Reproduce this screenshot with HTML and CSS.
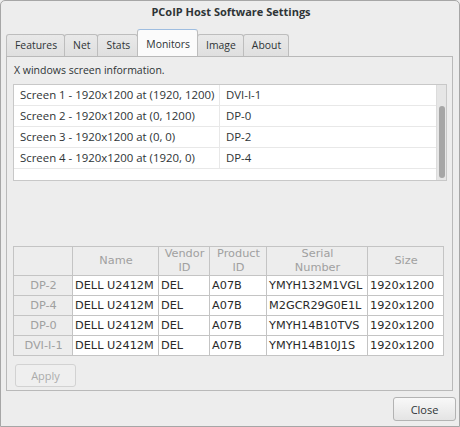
FILE: index.html
```html
<!DOCTYPE html>
<html>
<head>
<meta charset="utf-8">
<title>PCoIP Host Software Settings</title>
<link rel="stylesheet" href="styles.css">
</head>
<body>
<div class="window">
  <div class="titlebar">PCoIP Host Software Settings</div>
  <div class="notebook">
    <div class="tabs">
      <div class="tab">Features</div>
      <div class="tab">Net</div>
      <div class="tab">Stats</div>
      <div class="tab active">Monitors</div>
      <div class="tab">Image</div>
      <div class="tab">About</div>
    </div>
    <div class="panel">
      <div class="label">X windows screen information.</div>
      <div class="listbox">
        <div class="rows">
          <div class="row"><span class="c1">Screen 1 - 1920x1200 at (1920, 1200)</span><span class="c2">DVI-I-1</span></div>
          <div class="row"><span class="c1">Screen 2 - 1920x1200 at (0, 1200)</span><span class="c2">DP-0</span></div>
          <div class="row"><span class="c1">Screen 3 - 1920x1200 at (0, 0)</span><span class="c2">DP-2</span></div>
          <div class="row"><span class="c1">Screen 4 - 1920x1200 at (1920, 0)</span><span class="c2">DP-4</span></div>
        </div>
        <div class="scrollbar"><div class="thumb"></div></div>
      </div>
      <table class="grid">
        <colgroup>
          <col class="w-rh"><col class="w-name"><col class="w-vid"><col class="w-pid"><col class="w-sn"><col class="w-size">
        </colgroup>
        <tr class="head">
          <th></th><th>Name</th><th>Vendor<br>ID</th><th>Product<br>ID</th><th>Serial<br>Number</th><th>Size</th>
        </tr>
        <tr><td class="rh">DP-2</td><td>DELL U2412M</td><td>DEL</td><td>A07B</td><td>YMYH132M1VGL</td><td>1920x1200</td></tr>
        <tr><td class="rh">DP-4</td><td>DELL U2412M</td><td>DEL</td><td>A07B</td><td>M2GCR29G0E1L</td><td>1920x1200</td></tr>
        <tr><td class="rh">DP-0</td><td>DELL U2412M</td><td>DEL</td><td>A07B</td><td>YMYH14B10TVS</td><td>1920x1200</td></tr>
        <tr><td class="rh">DVI-I-1</td><td>DELL U2412M</td><td>DEL</td><td>A07B</td><td>YMYH14B10J1S</td><td>1920x1200</td></tr>
      </table>
      <div class="apply-row"><button class="btn apply" disabled>Apply</button></div>
    </div>
  </div>
  <div class="footer"><button class="btn close">Close</button></div>
</div>
</body>
</html>
```
FILE: styles.css
```css
* { box-sizing: border-box; }
html, body { margin: 0; padding: 0; }
body {
  width: 460px;
  height: 427px;
  overflow: hidden;
  background: #ededed;
  font-family: "Open Sans", "DejaVu Sans", sans-serif;
  font-size: 11px;
  color: #2e3436;
}
.window {
  width: 460px;
  height: 427px;
  border: 1px solid #a6a6a6;
  border-radius: 5px 5px 0 0;
  background: #ededed;
  padding: 0 3px 0 5px;
  display: flex;
  flex-direction: column;
}
.titlebar {
  height: 28px;
  line-height: 22px;
  text-align: center;
  font-weight: bold;
  font-size: 11px;
  color: #2e3436;
}
.notebook { width: 447px; }
.tabs {
  height: 27px;
  display: flex;
  align-items: flex-end;
  padding-left: 1px;
}
.tab {
  height: 22px;
  line-height: 21px;
  padding: 0 7px 0 8px;
  margin-left: -1px;
  border: 1px solid #bdbdbd;
  border-bottom: none;
  border-radius: 3px 3px 0 0;
  background: linear-gradient(#e9e9e9, #dfdfdf);
  color: #2e3436;
  font-size: 10.4px;
}
.tab.active {
  height: 27px;
  padding-top: 4px;
  background: #fbfbfb;
  border-top-color: #9ebde0;
  position: relative;
  z-index: 1;
}
.panel {
  height: 335px;
  border: 1px solid #b9b9b9;
  background: #ededed;
  padding: 0 6px;
}
.label {
  height: 27px;
  line-height: 27px;
  font-size: 10.5px;
  padding-left: 1px;
}
.listbox {
  width: 434px;
  height: 97px;
  border: 1px solid #c8c8c8;
  background: #fff;
  display: flex;
}
.rows { flex: 1; }
.row {
  height: 21px;
  display: flex;
  border-bottom: 1px solid #e8e8e8;
  line-height: 20px;
  font-size: 11.4px;
}
.c1 {
  width: 206px;
  padding-left: 6px;
  border-right: 1px solid #e8e8e8;
  white-space: nowrap;
}
.c2 { padding-left: 6px; }
.scrollbar {
  width: 10px;
  background: #e6e6e6;
  border-left: 1px solid #dcdcdc;
  padding: 21px 0 0 2px;
}
.thumb {
  width: 6px;
  height: 72px;
  border-radius: 3px;
  background: #a6a6a6;
}
.grid {
  margin-top: 65px;
  width: 430px;
  table-layout: fixed;
  border-collapse: collapse;
  font-family: "DejaVu Sans", sans-serif;
  font-size: 11.3px;
}
.w-rh { width: 59px; }
.w-name { width: 86px; }
.w-vid { width: 51px; }
.w-pid { width: 57px; }
.w-sn { width: 101px; }
.w-size { width: 76px; }
.grid th, .grid td {
  border: 1px solid #c4c4c4;
  padding: 0 1px 0 2px;
  white-space: nowrap;
  overflow: hidden;
}
.grid tr { height: 20px; }
.grid tr.head { height: 29px; }
.grid th {
  background: #ededed;
  color: #a0a0a0;
  font-weight: normal;
  line-height: 14px;
  text-align: center;
}
.grid td {
  background: #fff;
  color: #2a2a2a;
  line-height: 18px;
}
.grid td.rh {
  background: #ededed;
  color: #a0a0a0;
  text-align: center;
}
.apply-row { padding: 8px 0 0 2px; }
.btn {
  font-family: "Open Sans", "DejaVu Sans", sans-serif;
  font-size: 11px;
  border-radius: 3px;
  padding: 0;
}
.apply {
  width: 61px;
  height: 23px;
  border: 1px solid #d2d2d2;
  background: #efefef;
  color: #ababab;
}
.footer {
  display: flex;
  justify-content: flex-end;
  padding-top: 6px;
}
.close {
  width: 63px;
  height: 24px;
  border: 1px solid #b3b3b3;
  background: linear-gradient(#f8f8f8, #e4e4e4);
  color: #2e3436;
}
```
